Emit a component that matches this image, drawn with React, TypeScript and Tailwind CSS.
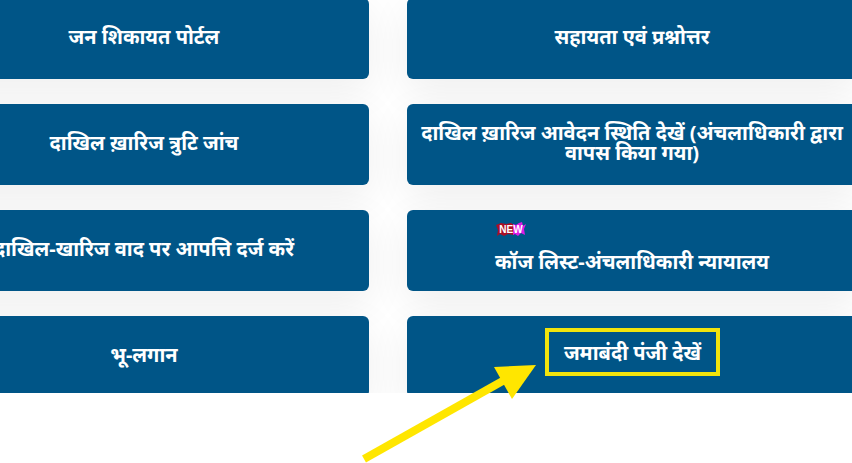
function Tile({ children }: { children: React.ReactNode }) {
  return (
    <div className="h-[81px] bg-[#005587] rounded-[6px] flex flex-col items-center justify-center text-white font-bold text-center text-[20px] leading-[20px] px-2 pb-[4px] shadow-[0_12px_40px_rgba(0,0,0,0.07)]">
      {children}
    </div>
  )
}

function NewBadge() {
  return (
    <span className="relative block w-[30px] h-[15px] mb-[15px] ml-[1px]">
      <svg className="absolute inset-0" width="30" height="15" viewBox="0 0 30 15">
        <polygon points="0,3 5,1 10,2 15,1 18,3 18,13 12,12 8,14 4,12 1,14 2,8" fill="#a90f26" />
        <polygon points="17,2 20,3 23,1 26,0 27,4 30,2 28,7 29,13 25,11 22,14 19,12 17,13" fill="#dc1ce6" />
      </svg>
      <span className="absolute inset-0 flex items-center justify-center font-['Liberation_Sans',sans-serif] text-[10px] leading-[15px] font-bold text-white">NEW</span>
    </span>
  )
}

export default function App() {
  return (
    <div className="w-[852px] h-[463px] bg-white overflow-hidden relative font-['Noto_Sans','Noto_Sans_CJK_SC',sans-serif]">
      <div className="h-[393px] overflow-hidden">
        <div className="grid grid-cols-[450px_450px] gap-x-[38px] gap-y-[25px] mt-[-2px] ml-[-81px] w-[938px]">
          <Tile>जन शिकायत पोर्टल</Tile>
          <Tile>सहायता एवं प्रश्नोत्तर</Tile>
          <Tile>दाखिल ख़ारिज त्रुटि जांच</Tile>
          <Tile>दाखिल ख़ारिज आवेदन स्थिति देखें (अंचलाधिकारी द्वारा वापस किया गया)</Tile>
          <Tile><span className="whitespace-nowrap">दाखिल-खारिज वाद पर आपत्ति दर्ज करें</span></Tile>
          <Tile>
            <span className="inline-flex flex-col items-start mb-[4px]">
              <NewBadge />
              <span>कॉज लिस्ट-अंचलाधिकारी न्यायालय</span>
            </span>
          </Tile>
          <Tile>भू-लगान</Tile>
          <Tile><span className="pb-[4px] pl-[1px]">जमाबंदी पंजी देखें</span></Tile>
        </div>
      </div>
      <div className="absolute left-[545px] top-[328px] w-[175px] h-[48px] border-[4px] border-[#f2e40c]" />
      <svg className="absolute left-0 top-0" width="852" height="463">
        <line x1="364" y1="459" x2="508" y2="378" stroke="#ffe600" strokeWidth="8" />
        <polygon points="536,365 494,367 512,399" fill="#ffe600" />
      </svg>
    </div>
  )
}
